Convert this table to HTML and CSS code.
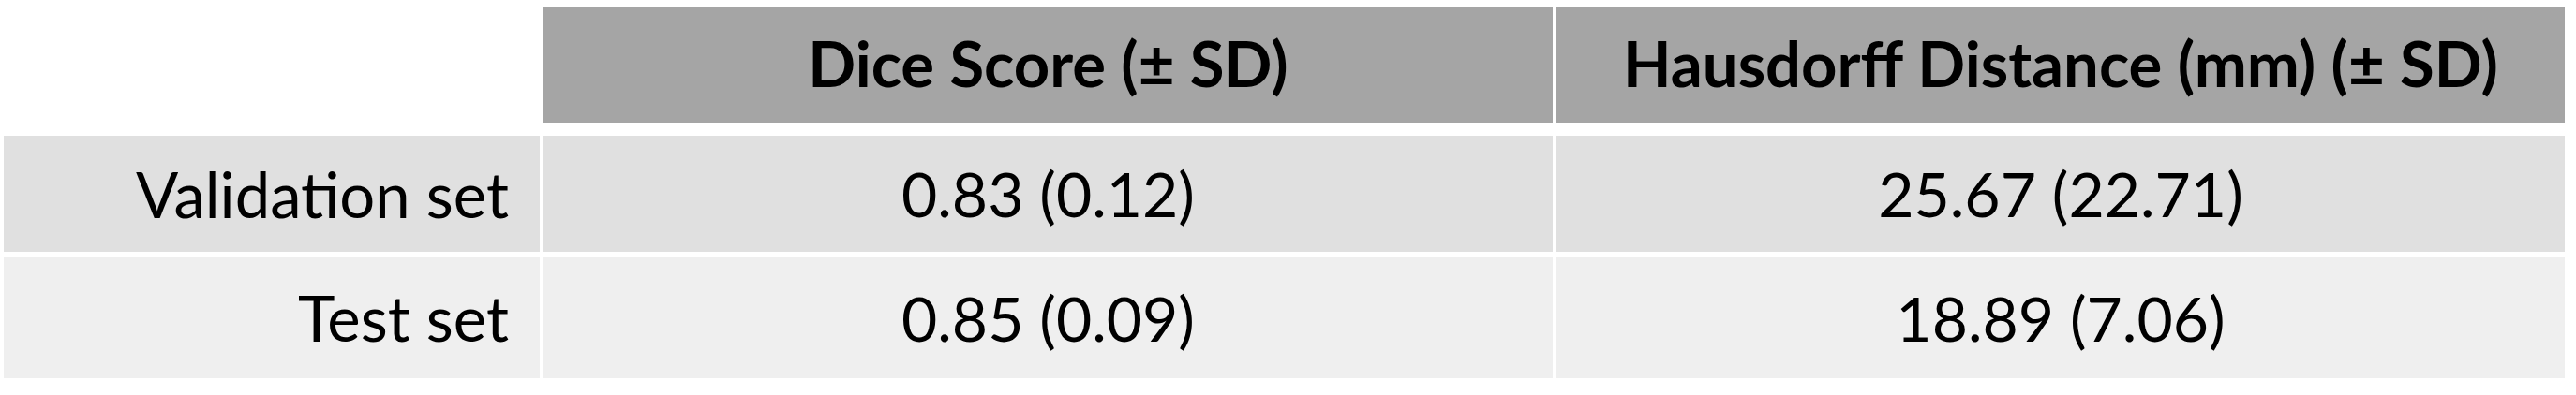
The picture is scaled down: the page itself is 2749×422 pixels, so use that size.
FILE: index.html
```html
<!DOCTYPE html>
<html>
<head>
<meta charset="utf-8">
<link rel="stylesheet" href="styles.css">
</head>
<body>
<div class="table">
  <div class="row head">
    <div class="cell blank"></div>
    <div class="cell hd">Dice Score (± SD)</div>
    <div class="cell hd">Hausdorff Distance (mm) (± SD)</div>
  </div>
  <div class="row r1">
    <div class="cell label">Validation set</div>
    <div class="cell val">0.83 (0.12)</div>
    <div class="cell val">25.67 (22.71)</div>
  </div>
  <div class="row r2">
    <div class="cell label">Test set</div>
    <div class="cell val">0.85 (0.09)</div>
    <div class="cell val">18.89 (7.06)</div>
  </div>
</div>
</body>
</html>
```
FILE: styles.css
```css
html, body {
  margin: 0;
  padding: 0;
  background: #ffffff;
}
body {
  font-family: Lato, "Open Sans", sans-serif;
  color: #000000;
}
.table {
  display: flex;
  flex-direction: column;
  gap: 6px;
  padding: 7px 0 0 4px;
}
.row {
  display: grid;
  grid-template-columns: 572px 1077px 1076px;
  column-gap: 4px;
}
.head {
  height: 124px;
  margin-bottom: 8px;
}
.r1 {
  height: 124px;
}
.r2 {
  height: 129px;
}
.cell {
  display: flex;
  align-items: center;
  justify-content: center;
  font-size: 66px;
  line-height: 1;
}
.blank {
  background: #ffffff;
}
.hd {
  background: #a5a5a5;
  font-weight: 700;
  font-size: 67px;
  padding-bottom: 4px;
}
.r1 .cell {
  background: #e0e0e0;
}
.r2 .cell {
  background: #efefef;
}
.label {
  justify-content: flex-end;
  padding-right: 33px;
  font-size: 67px;
}
```
